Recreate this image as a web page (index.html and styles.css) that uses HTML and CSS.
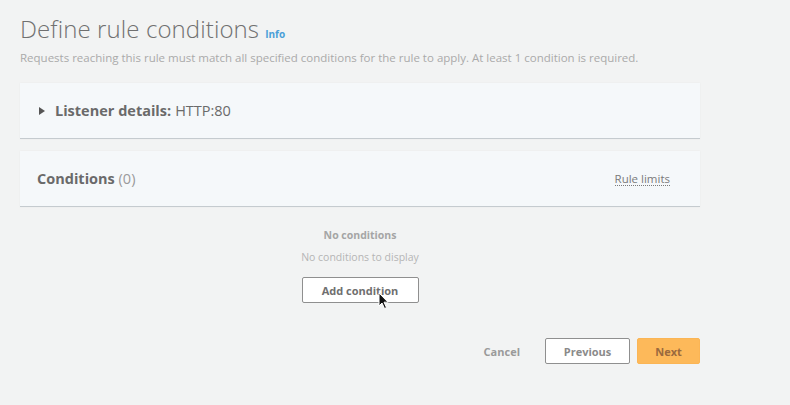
FILE: index.html
```html
<!DOCTYPE html>
<html>
<head>
<meta charset="utf-8">
<link rel="stylesheet" href="styles.css">
</head>
<body>
<div class="page">
  <div class="header">
    <h1 class="title">Define rule conditions</h1>
    <a class="info">Info</a>
  </div>
  <p class="desc">Requests reaching this rule must match all specified conditions for the rule to apply. At least 1 condition is required.</p>

  <div class="card card-listener">
    <span class="caret"></span>
    <span class="listener-label">Listener details:</span>
    <span class="listener-value">HTTP:80</span>
  </div>

  <div class="card card-conditions">
    <span class="cond-title">Conditions <span class="count">(0)</span></span>
    <span class="rule-limits">Rule limits</span>
  </div>

  <div class="empty">
    <div class="empty-title">No conditions</div>
    <div class="empty-sub">No conditions to display</div>
    <div class="add-wrap">
      <button class="btn btn-add">Add condition</button>
      <svg class="cursor" width="12" height="18" viewBox="0 0 12 18"><path d="M1 1 L1 14 L4 11 L6.5 16.5 L8.5 15.6 L6 10.2 L10 10.2 Z" fill="#111" stroke="#fff" stroke-width="1"/></svg>
    </div>
  </div>

  <div class="footer">
    <a class="cancel">Cancel</a>
    <button class="btn btn-prev">Previous</button>
    <button class="btn btn-next">Next</button>
  </div>
</div>
</body>
</html>
```

FILE: styles.css
```css
html, body {
  margin: 0;
  padding: 0;
  background: #f2f3f3;
}
body {
  font-family: "Open Sans", "Noto Sans", sans-serif;
}
.page {
  width: 680px;
  padding: 13px 20px 0 20px;
}
.header {
  display: flex;
  align-items: baseline;
  gap: 6px;
}
.title {
  margin: 0;
  font-size: 24px;
  font-weight: 300;
  color: #707070;
  line-height: 32px;
  letter-spacing: 0.1px;
}
.info {
  font-size: 10px;
  font-weight: 700;
  color: #4a9fd8;
}
.desc {
  margin: 6px 0 0 0;
  font-size: 11.5px;
  color: #aaaaaa;
  line-height: 14px;
  white-space: nowrap;
}
.card {
  background: #f5f8fa;
  border-bottom: 1px solid #c5cbcf;
  box-shadow: 0 0 2px rgba(0,0,0,0.04);
  height: 56px;
  display: flex;
  align-items: center;
  padding: 0 17px;
  box-sizing: border-box;
}
.card-listener {
  margin-top: 18px;
  font-size: 14.5px;
  color: #6a6a6a;
}
.caret {
  width: 0;
  height: 0;
  border-left: 6px solid #555;
  border-top: 4px solid transparent;
  border-bottom: 4px solid transparent;
  margin-left: 2px;
  margin-right: 10px;
}
.listener-label {
  font-weight: 700;
  margin-right: 4px;
}
.card-conditions {
  margin-top: 12px;
  justify-content: space-between;
  padding-right: 30px;
}
.cond-title {
  font-size: 14.5px;
  font-weight: 700;
  color: #6a6a6a;
}
.count {
  font-weight: 400;
  color: #9a9a9a;
}
.rule-limits {
  font-size: 11.5px;
  color: #7a7a7a;
  border-bottom: 1px dotted #7a7a7a;
  line-height: 13px;
}
.empty {
  display: flex;
  flex-direction: column;
  align-items: center;
  padding-top: 21px;
}
.empty-title {
  font-size: 10.5px;
  font-weight: 700;
  color: #a5a5a5;
  line-height: 14px;
}
.empty-sub {
  margin-top: 8px;
  font-size: 10.5px;
  color: #b5b5b5;
  line-height: 14px;
}
.add-wrap {
  position: relative;
  margin-top: 13px;
}
.btn {
  font-family: "Open Sans", "Noto Sans", sans-serif;
  font-size: 11px;
  font-weight: 700;
  box-sizing: border-box;
  cursor: pointer;
}
.btn-add {
  width: 117px;
  height: 26px;
  background: #ffffff;
  border: 1px solid #8f8f8f;
  border-radius: 2px;
  color: #6f6f6f;
}
.cursor {
  position: absolute;
  left: 76px;
  top: 15px;
}
.footer {
  display: flex;
  justify-content: flex-end;
  align-items: center;
  margin-top: 35px;
  gap: 0;
}
.cancel {
  font-size: 11px;
  font-weight: 700;
  color: #9a9a9a;
  margin-right: 25px;
}
.btn-prev {
  width: 85px;
  height: 26px;
  background: #ffffff;
  border: 1px solid #8f8f8f;
  border-radius: 2px;
  color: #8a8a8a;
  margin-right: 7px;
}
.btn-next {
  width: 63px;
  height: 26px;
  background: #fdb95a;
  border: 1px solid #fbb555;
  border-radius: 2px;
  color: #9a6a3e;
}
```
